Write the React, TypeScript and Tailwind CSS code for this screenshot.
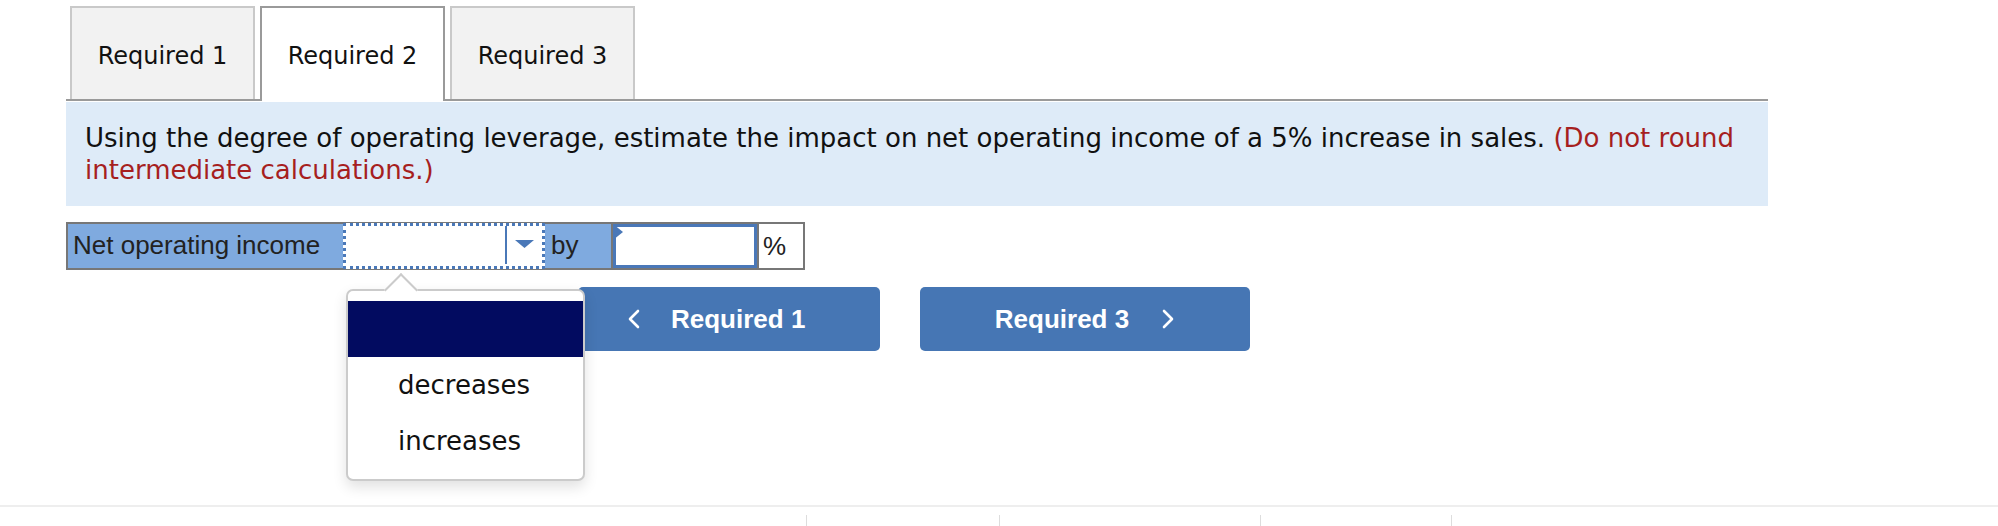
const tabs = ["Required 1", "Required 2", "Required 3"];

const Chevron = ({ dir }: { dir: "left" | "right" }) => (
  <svg width="14" height="22" viewBox="0 0 14 22" fill="none" stroke="white" strokeWidth="2.6" strokeLinecap="round" strokeLinejoin="round">
    {dir === "left" ? <polyline points="11,3 3,11 11,19" /> : <polyline points="3,3 11,11 3,19" />}
  </svg>
);

export default function App() {
  return (
    <div className="min-h-[526px] w-[1998px] bg-white font-['DejaVu_Sans',sans-serif]">
      <div className="pl-[66px] pt-[6px] w-[1768px]">
        {/* tabs */}
        <div className="flex gap-[5px] pl-[4px] border-b-2 border-[#9a9a9a] h-[95px] items-start">
          {tabs.map((t, i) =>
            i === 1 ? (
              <div
                key={t}
                className="w-[185px] h-[95px] border-2 border-b-0 border-[#9a9a9a] bg-white flex items-center justify-center text-[24px] text-[#111] pt-[2px] relative z-10"
              >
                {t}
              </div>
            ) : (
              <div
                key={t}
                className="w-[185px] h-[93px] border-2 border-b-0 border-[#c9c9c9] bg-[#f2f2f2] flex items-center justify-center text-[24px] text-[#111] pt-[4px]"
              >
                {t}
              </div>
            )
          )}
        </div>

        {/* question */}
        <div className="mt-[1px] bg-[#deebf8] px-[19px] pt-[20px] pb-[20px] text-[26px] leading-[32px] text-[#111]">
          Using the degree of operating leverage, estimate the impact on net operating income of a 5% increase in sales.{" "}
          <span className="text-[#a61f1f]">(Do not round intermediate calculations.)</span>
        </div>

        {/* answer row */}
        <div className="mt-[16px] flex h-[48px] w-[739px] border-2 border-[#777] bg-[#7faadf] font-['Liberation_Sans',sans-serif] text-[26px] text-[#222]">
          <div className="w-[275px] flex items-center pl-[5px] -mt-[2px]">Net operating income</div>
          <div className="relative w-[202px] border-[3px] border-dotted border-[#4a78b8] bg-white -mt-[1px] h-[46px]">
            <div className="absolute left-[159px] top-0 h-[38px] w-[2px] bg-[#4a78b8]" />
            <svg className="absolute left-[169px] top-[14px]" width="19" height="8" viewBox="0 0 19 8">
              <polygon points="0,0 19,0 9.5,8" fill="#4a78b8" />
            </svg>
            {/* dropdown popup */}
            <div className="absolute left-[0px] top-[63px] w-[239px] h-[192px] bg-white border-2 border-[#cbcbcb] rounded-[7px] shadow-[0_6px_14px_rgba(0,0,0,0.12)] z-20 pt-[10px] font-['DejaVu_Sans',sans-serif] text-[26px] text-[#111]">
              <div className="absolute left-[41px] -top-[13px] w-[24px] h-[24px] rotate-45 bg-white border-l-2 border-t-2 border-[#cbcbcb]" />
              <div className="relative h-[56px] bg-[#020b60]" />
              <div className="h-[56px] flex items-center pl-[50px]">decreases</div>
              <div className="h-[56px] flex items-center pl-[50px]">increases</div>
            </div>
          </div>
          <div className="w-[66px] flex items-center pl-[6px] -mt-[2px]">by</div>
          <div className="relative w-[146px] border-l-2 border-[#777]">
            <div className="h-full bg-white border-[3px] border-[#4a78b8]" />
            <svg className="absolute left-0 top-0" width="10" height="16" viewBox="0 0 10 16">
              <polygon points="0,0 10,8 0,16" fill="#4a78b8" />
            </svg>
          </div>
          <div className="flex-1 bg-white border-l-2 border-[#777] flex items-center pl-[4px]">%</div>
        </div>

        {/* nav buttons */}
        <div className="mt-[17px] ml-[512px] flex gap-[40px] font-['Liberation_Sans',sans-serif] text-[26px] font-bold text-white">
          <div className="w-[302px] h-[64px] rounded-[5px] bg-[#4676b4] flex items-center pl-[49px] gap-[30px]">
            <Chevron dir="left" />
            <span>Required 1</span>
          </div>
          <div className="w-[330px] h-[64px] rounded-[5px] bg-[#4676b4] flex items-center justify-center gap-[32px]">
            <span>Required 3</span>
            <Chevron dir="right" />
          </div>
        </div>
      </div>

      {/* footer */}
      <div className="mt-[154px] border-t-2 border-[#eeeeee] pt-[8px]">
        <div className="ml-[806px] flex h-[12px]">
          <div className="w-[193px] border-l border-[#dddddd]" />
          <div className="w-[261px] border-l border-[#dddddd]" />
          <div className="w-[192px] border-l border-r border-[#dddddd]" />
        </div>
      </div>
    </div>
  );
}
